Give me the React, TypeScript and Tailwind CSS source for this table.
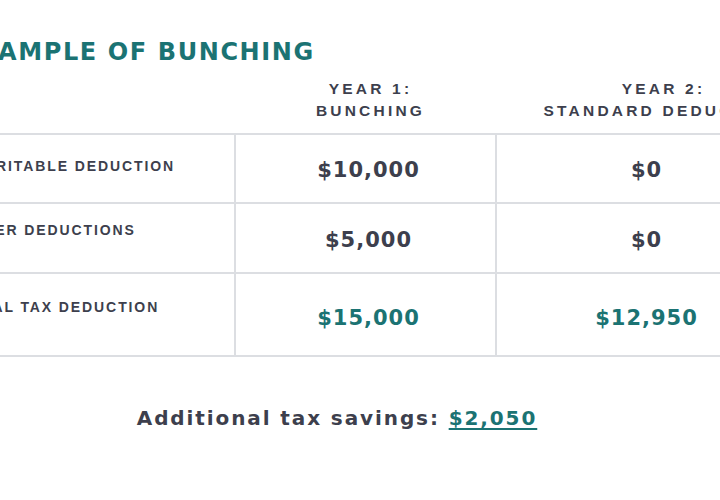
const rows = [
  { label: "CHARITABLE DEDUCTION", y1: "$10,000", y2: "$0", h: "h-[69px]", lp: "pt-[21px]", vp: "pt-[5px]", total: false },
  { label: "OTHER DEDUCTIONS", y1: "$5,000", y2: "$0", h: "h-[70px]", lp: "pt-[16px]", vp: "pt-[5px]", total: false },
  { label: "TOTAL TAX DEDUCTION", y1: "$15,000", y2: "$12,950", h: "h-[83px]", lp: "pt-[23px]", vp: "pt-[9px]", total: true },
];

export default function App() {
  return (
    <div className="h-[500px] w-[720px] overflow-hidden bg-white">
      <div className="ml-[-34px] w-[830px] pt-[38px]">
        <h1 className="ml-[-6px] font-['DejaVu_Sans',sans-serif] text-[24px] font-bold leading-[28px] tracking-[1.6px] text-[#1b7373]">
          EXAMPLE OF BUNCHING
        </h1>

        <div className="mt-[12px] grid grid-cols-[270px_261px_299px] font-['Liberation_Sans',sans-serif] text-[15.5px] font-bold leading-[22px] tracking-[3.2px] text-[#3d3f4d]">
          <div />
          <div className="pb-[11px] pl-[8px] text-center">
            YEAR 1:
            <br />
            BUNCHING
          </div>
          <div className="pb-[11px] pl-[34px] text-center whitespace-nowrap">
            YEAR 2:
            <br />
            STANDARD DEDUCTION
          </div>
        </div>

        <div className="border-b-2 border-[#dcdee2]">
          {rows.map((r) => (
            <div
              key={r.label}
              className={`grid grid-cols-[270px_261px_299px] border-t-2 border-[#dcdee2] ${r.h}`}
            >
              <div
                className={`border-r-2 border-[#dcdee2] ${r.lp} -ml-[6px] font-['Liberation_Sans',sans-serif] text-[14px] font-bold tracking-[1.9px] text-[#3d3f4d]`}
              >
                {r.label}
              </div>
              <div
                className={`flex items-center justify-center border-r-2 border-[#dcdee2] ${r.vp} pl-[6px] font-['DejaVu_Sans',sans-serif] text-[21px] font-bold tracking-[1px] ${
                  r.total ? "text-[#1b7373]" : "text-[#3d3f4d]"
                }`}
              >
                {r.y1}
              </div>
              <div
                className={`flex items-center justify-center ${r.vp} font-['DejaVu_Sans',sans-serif] text-[21px] font-bold tracking-[1px] ${
                  r.total ? "text-[#1b7373]" : "text-[#3d3f4d]"
                }`}
              >
                {r.y2}
              </div>
            </div>
          ))}
        </div>
      </div>

      <p className="mt-[46px] pr-[46px] text-center font-['DejaVu_Sans',sans-serif] text-[20px] font-bold tracking-[1.9px] text-[#3d3f4d]">
        Additional tax savings:{" "}
        <span className="text-[#1b7373] underline decoration-2 underline-offset-[3px]">$2,050</span>
      </p>
    </div>
  );
}
